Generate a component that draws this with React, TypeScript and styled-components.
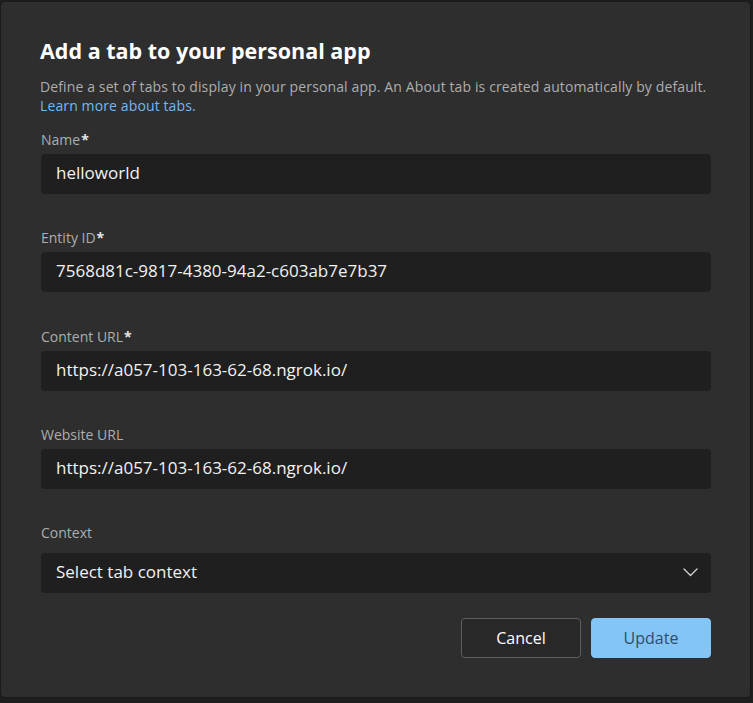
import React from "react";
import styled, { createGlobalStyle } from "styled-components";

const GlobalStyle = createGlobalStyle`
  html, body { margin: 0; padding: 0; background: #1e1e1e; }
  body { font-family: "Open Sans", "Noto Sans", sans-serif; }
  * { box-sizing: border-box; }
`;

const Page = styled.div`
  width: 753px;
  height: 703px;
  padding: 2px 3px 0 1px;
  background: #1e1e1e;
`;

const Dialog = styled.div`
  width: 749px;
  background: #2e2e2e;
  border-radius: 4px;
  padding: 35px 39px 39px 40px;
  display: flex;
  flex-direction: column;
  box-shadow: 0 0 2px rgba(0, 0, 0, 0.4);
`;

const Title = styled.h1`
  margin: 0 0 0 -1px;
  font-size: 21.5px;
  line-height: 28px;
  font-weight: 700;
  color: #ffffff;
`;

const Description = styled.p`
  margin: 12px 0 0 -1px;
  font-size: 14px;
  line-height: 19px;
  letter-spacing: 0.12px;
  color: #adadad;
`;

const Link = styled.a`
  color: #74b7f0;
  text-decoration: none;
`;

const Form = styled.div`
  display: flex;
  flex-direction: column;
  margin-top: 14px;
`;

const Field = styled.div<{ $last?: boolean }>`
  display: flex;
  flex-direction: column;
  margin-bottom: ${(p) => (p.$last ? "0" : "33.3px")};
`;

const Label = styled.label<{ $gap: number }>`
  font-size: 14px;
  line-height: 19px;
  color: #adadad;
  margin-top: 1px;
  margin-bottom: ${(p) => p.$gap - 1}px;
`;

const Star = styled.span`
  color: #e6e6e6;
  font-weight: 700;
  margin-left: 1px;
`;

const Input = styled.div`
  height: 40px;
  background: #1f1f1f;
  border-radius: 4px;
  display: flex;
  align-items: center;
  padding: 0 14px 3px 15px;
  font-size: 17px;
  color: #f2f2f2;
  white-space: nowrap;
`;

const Select = styled(Input)`
  justify-content: space-between;
  padding-right: 13px;
`;

const Chevron = styled.svg`
  width: 15px;
  height: 9px;
  margin-top: 2px;
`;

const Actions = styled.div`
  display: flex;
  justify-content: flex-end;
  gap: 10px;
  margin-top: 25px;
`;

const Button = styled.button<{ $primary?: boolean }>`
  width: 120px;
  height: 40px;
  border-radius: 4px;
  font-family: "Open Sans", "Noto Sans", sans-serif;
  font-size: 16px;
  padding: 0 0 1px 0;
  cursor: pointer;
  border: 1px solid ${(p) => (p.$primary ? "#84c5f7" : "#5e5e5e")};
  background: ${(p) => (p.$primary ? "#84c5f7" : "#282828")};
  color: ${(p) => (p.$primary ? "#2d4d6b" : "#ffffff")};
`;

const fields = [
  { label: "Name", required: true, value: "helloworld" },
  { label: "Entity ID", required: true, value: "7568d81c-9817-4380-94a2-c603ab7e7b37" },
  { label: "Content URL", required: true, value: "https://a057-103-163-62-68.ngrok.io/" },
  { label: "Website URL", required: false, value: "https://a057-103-163-62-68.ngrok.io/" },
];

export default function App() {
  return (
    <>
      <GlobalStyle />
      <Page>
        <Dialog>
          <Title>Add a tab to your personal app</Title>
          <Description>
            Define a set of tabs to display in your personal app. An About tab is created automatically by default.
            <br />
            <Link href="#">Learn more about tabs.</Link>
          </Description>
          <Form>
            {fields.map((f) => (
              <Field key={f.label}>
                <Label $gap={6}>
                  {f.label}
                  {f.required && <Star>*</Star>}
                </Label>
                <Input>{f.value}</Input>
              </Field>
            ))}
            <Field $last>
              <Label $gap={12}>Context</Label>
              <Select>
                <span>Select tab context</span>
                <Chevron viewBox="0 0 15 9" fill="none">
                  <path d="M1 1 L7.5 7.5 L14 1" stroke="#d6d6d6" strokeWidth="1.3" strokeLinecap="round" strokeLinejoin="round" />
                </Chevron>
              </Select>
            </Field>
          </Form>
          <Actions>
            <Button>Cancel</Button>
            <Button $primary>Update</Button>
          </Actions>
        </Dialog>
      </Page>
    </>
  );
}
